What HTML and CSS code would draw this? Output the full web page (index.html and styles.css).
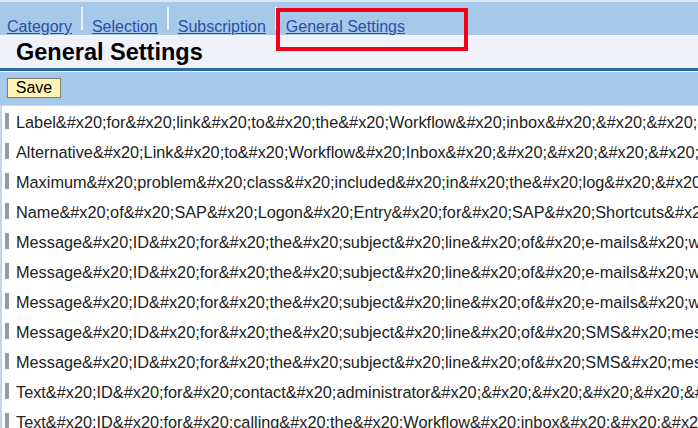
FILE: index.html
```html
<!DOCTYPE html>
<html>
<head>
<meta charset="utf-8">
<link rel="stylesheet" href="styles.css">
</head>
<body>
<div class="page">
  <div class="tabbar">
    <a class="tab" href="#">Category</a>
    <span class="sep"></span>
    <a class="tab" href="#">Selection</a>
    <span class="sep"></span>
    <a class="tab" href="#">Subscription</a>
    <span class="sep"></span>
    <a class="tab" href="#">General Settings</a>
  </div>
  <div class="header"><h1 class="title">General Settings</h1></div>
  <div class="toolbar"><button class="save">Save</button></div>
  <div class="content">
    <div class="row"><span class="bar"></span><span class="label">Label&amp;#x20;for&amp;#x20;link&amp;#x20;to&amp;#x20;the&amp;#x20;Workflow&amp;#x20;inbox&amp;#x20;&amp;#x20;&amp;#x20;&amp;#x20;&amp;#x20;&amp;#x20;</span></div>
    <div class="row"><span class="bar"></span><span class="label">Alternative&amp;#x20;Link&amp;#x20;to&amp;#x20;Workflow&amp;#x20;Inbox&amp;#x20;&amp;#x20;&amp;#x20;&amp;#x20;&amp;#x20;&amp;#x20;&amp;#x20;</span></div>
    <div class="row"><span class="bar"></span><span class="label">Maximum&amp;#x20;problem&amp;#x20;class&amp;#x20;included&amp;#x20;in&amp;#x20;the&amp;#x20;log&amp;#x20;&amp;#x20;&amp;#x20;&amp;#x20;</span></div>
    <div class="row"><span class="bar"></span><span class="label">Name&amp;#x20;of&amp;#x20;SAP&amp;#x20;Logon&amp;#x20;Entry&amp;#x20;for&amp;#x20;SAP&amp;#x20;Shortcuts&amp;#x20;&amp;#x20;&amp;#x20;</span></div>
    <div class="row"><span class="bar"></span><span class="label">Message&amp;#x20;ID&amp;#x20;for&amp;#x20;the&amp;#x20;subject&amp;#x20;line&amp;#x20;of&amp;#x20;e-mails&amp;#x20;with&amp;#x20;new&amp;#x20;messages</span></div>
    <div class="row"><span class="bar"></span><span class="label">Message&amp;#x20;ID&amp;#x20;for&amp;#x20;the&amp;#x20;subject&amp;#x20;line&amp;#x20;of&amp;#x20;e-mails&amp;#x20;with&amp;#x20;reminders</span></div>
    <div class="row"><span class="bar"></span><span class="label">Message&amp;#x20;ID&amp;#x20;for&amp;#x20;the&amp;#x20;subject&amp;#x20;line&amp;#x20;of&amp;#x20;e-mails&amp;#x20;with&amp;#x20;escalations</span></div>
    <div class="row"><span class="bar"></span><span class="label">Message&amp;#x20;ID&amp;#x20;for&amp;#x20;the&amp;#x20;subject&amp;#x20;line&amp;#x20;of&amp;#x20;SMS&amp;#x20;messages&amp;#x20;&amp;#x20;</span></div>
    <div class="row"><span class="bar"></span><span class="label">Message&amp;#x20;ID&amp;#x20;for&amp;#x20;the&amp;#x20;subject&amp;#x20;line&amp;#x20;of&amp;#x20;SMS&amp;#x20;messages&amp;#x20;&amp;#x20;</span></div>
    <div class="row"><span class="bar"></span><span class="label">Text&amp;#x20;ID&amp;#x20;for&amp;#x20;contact&amp;#x20;administrator&amp;#x20;&amp;#x20;&amp;#x20;&amp;#x20;&amp;#x20;&amp;#x20;&amp;#x20;&amp;#x20;</span></div>
    <div class="row"><span class="bar"></span><span class="label">Text&amp;#x20;ID&amp;#x20;for&amp;#x20;calling&amp;#x20;the&amp;#x20;Workflow&amp;#x20;inbox&amp;#x20;&amp;#x20;&amp;#x20;&amp;#x20;&amp;#x20;</span></div>
  </div>
  <div class="highlight"></div>
</div>
</body>
</html>
```
FILE: styles.css
```css
html, body {
  margin: 0;
  padding: 0;
  background: #ffffff;
}
body {
  font-family: "Liberation Sans", Arial, sans-serif;
  overflow: hidden;
}
.page {
  position: relative;
  width: 698px;
  height: 428px;
  overflow: hidden;
}
.tabbar {
  display: flex;
  align-items: flex-end;
  height: 33px;
  border-top: 2px solid #d9e6f3;
  border-bottom: 1px solid #f4f7fb;
  background: #a6c8e9;
  padding-left: 7px;
  box-sizing: content-box;
}
.tab {
  font-size: 16px;
  line-height: 17px;
  color: #2a4ea6;
  text-decoration: underline;
  white-space: nowrap;
}
.sep {
  align-self: flex-start;
  margin: 5px 9px 0 9px;
  width: 2px;
  height: 23px;
  background: #e9f1f9;
}
.header {
  height: 32px;
  background: #eff2f8;
  padding-left: 16px;
}
.title {
  margin: 0;
  font-size: 23.5px;
  line-height: 32px;
  font-weight: bold;
  color: #000000;
}
.toolbar {
  border-top: 3px solid #2f6ba2;
  background: #a6c8e9;
  box-shadow: inset 0 1px 0 #e9f1f9;
  border-bottom: 1px solid #c6dbef;
  padding: 7px 0 0 7px;
  box-sizing: border-box;
  height: 38px;
}
.save {
  display: block;
  width: 54px;
  height: 20px;
  margin: 0;
  padding: 0;
  background: #fff3b3;
  border: 1px solid #7d7d70;
  font-family: "Liberation Sans", Arial, sans-serif;
  font-size: 16px;
  line-height: 18px;
  color: #000000;
}
.content {
  border-left: 2px solid #c3d6ea;
  padding-left: 3px;
}
.row {
  display: flex;
  align-items: center;
  height: 30px;
  white-space: nowrap;
  overflow: hidden;
}
.bar {
  flex: none;
  width: 4px;
  height: 16px;
  background: #8d9dab;
  margin-right: 7px;
}
.label {
  font-size: 16.3px;
  line-height: 18px;
  color: #222222;
  margin-top: 2px;
}
.highlight {
  position: absolute;
  left: 276px;
  top: 8px;
  width: 192px;
  height: 43px;
  border: 4px solid #f5001a;
  box-sizing: border-box;
}
```
